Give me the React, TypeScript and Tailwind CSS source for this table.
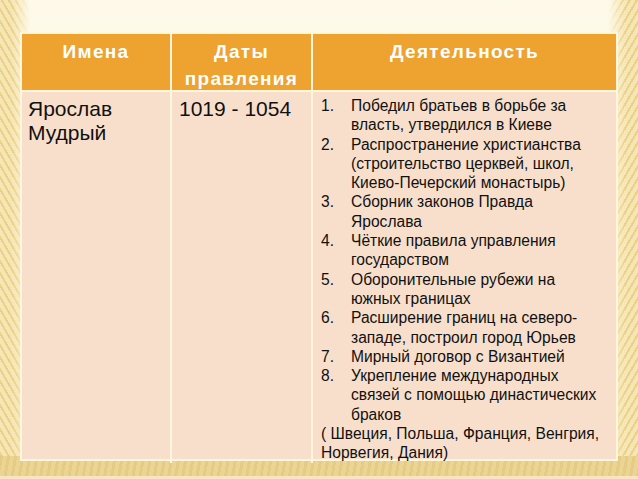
import React from "react";

const items: { n: string; lines: string[] }[] = [
  { n: "1.", lines: ["Победил братьев в борьбе за", "власть, утвердился в Киеве"] },
  { n: "2.", lines: ["Распространение христианства", "(строительство церквей, школ,", "Киево-Печерский монастырь)"] },
  { n: "3.", lines: ["Сборник законов Правда", "Ярослава"] },
  { n: "4.", lines: ["Чёткие правила управления", "государством"] },
  { n: "5.", lines: ["Оборонительные рубежи на", "южных границах"] },
  { n: "6.", lines: ["Расширение границ на северо-", "западе, построил город Юрьев"] },
  { n: "7.", lines: ["Мирный договор с Византией"] },
  { n: "8.", lines: ["Укрепление международных", "связей с помощью династических", "браков"] },
];

export default function App() {
  return (
    <div
      className="relative w-[638px] h-[479px] overflow-hidden bg-[linear-gradient(180deg,#fefaea_0%,#fcf2d6_50%,#f7e8bd_100%)]"
      style={{ fontFamily: '"Liberation Sans", Arial, sans-serif' }}
    >
      {/* decorative background stripes */}
      <div className="absolute left-0 top-0 h-full w-[30px] bg-[repeating-linear-gradient(60deg,#e9d188_0px,#e9d188_2px,#f6e6b6_2px,#f6e6b6_6px)] [mask-image:linear-gradient(90deg,#000_0%,#000_40%,transparent_100%)]" />
      <div className="absolute right-0 top-0 h-full w-[30px] bg-[repeating-linear-gradient(120deg,#e9d188_0px,#e9d188_2px,#f6e6b6_2px,#f6e6b6_6px)] [mask-image:linear-gradient(270deg,#000_0%,#000_40%,transparent_100%)]" />
      <div className="absolute left-0 bottom-[3px] w-full h-[20px] bg-[repeating-linear-gradient(100deg,#e5cb84_0px,#e5cb84_3px,#ebd595_3px,#ebd595_7px)]" />
      <div className="absolute left-0 bottom-0 w-full h-[3px] bg-[#f5e7bd]" />

      <div className="relative pt-[32px] pl-[20px]">
        <div className="w-[598px] border-2 border-[#fff6dc] bg-[#fff6dc]">
          {/* header */}
          <div className="grid grid-cols-[150px_141px_1fr] h-[56px] bg-[#eea22f] text-white font-bold text-[19px] leading-[27px] tracking-[1.3px] text-center">
            <div className="pt-[4px] border-r-2 border-[#fff6dc]">Имена</div>
            <div className="pt-[4px] border-r-2 border-[#fff6dc]">
              Даты
              <br />
              правления
            </div>
            <div className="pt-[4px]">Деятельность</div>
          </div>
          {/* body */}
          <div className="grid grid-cols-[150px_141px_1fr] h-[369px] bg-[#f8dfcc] border-t-2 border-[#fff6dc] text-[#111]">
            <div className="pt-[5px] pl-[6px] border-r-2 border-[#fff6dc] text-[21px] leading-[24px]">
              Ярослав
              <br />
              Мудрый
            </div>
            <div className="pt-[5px] pl-[7px] border-r-2 border-[#fff6dc] text-[21px] leading-[24px]">
              1019 - 1054
            </div>
            <div className="pt-[4px] pl-[8px] text-[15.6px] leading-[19.3px] whitespace-nowrap">
              {items.map((it) => (
                <div key={it.n} className="flex">
                  <span className="w-[30px] shrink-0">{it.n}</span>
                  <div>
                    {it.lines.map((l, i) => (
                      <div key={i}>{l}</div>
                    ))}
                  </div>
                </div>
              ))}
              <div>( Швеция, Польша, Франция, Венгрия,</div>
              <div>Норвегия, Дания)</div>
            </div>
          </div>
        </div>
      </div>
    </div>
  );
}
